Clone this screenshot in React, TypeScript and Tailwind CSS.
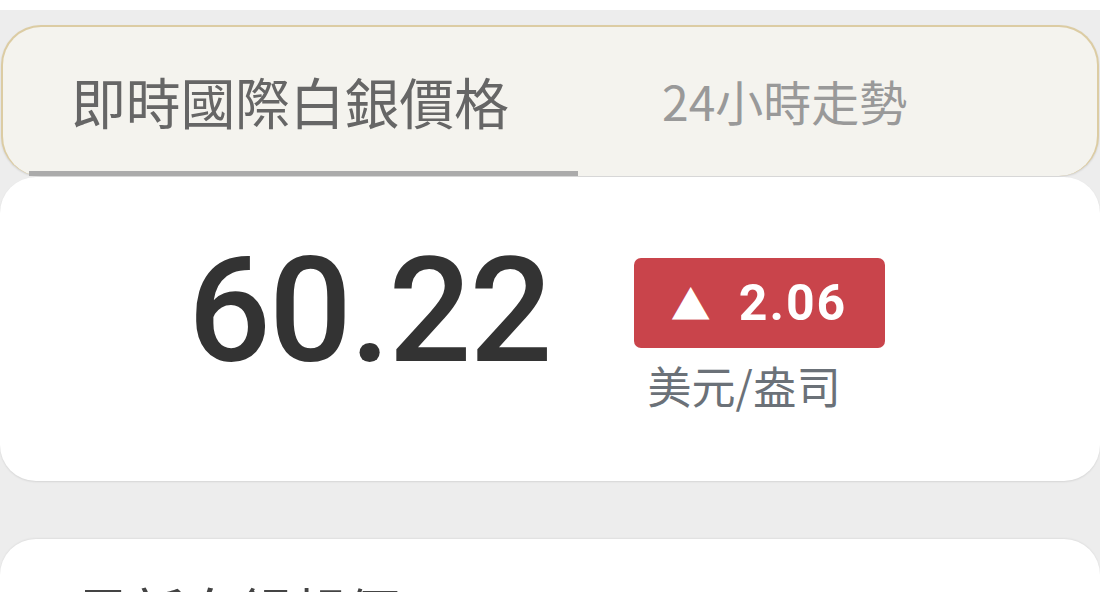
import React from "react";

const cjk = '"Noto Sans CJK TC", "Noto Sans", sans-serif';

export default function App() {
  return (
    <div className="w-[1100px] h-[592px] overflow-hidden bg-[#ededed]" style={{ fontFamily: cjk }}>
      <div className="h-[10px] bg-white" />
      <div className="pt-[15px] px-[1px]">
        <div className="h-[151px] rounded-[40px] border-x-2 border-t-2 border-b-0 border-[#dccca3] bg-[#f4f3ee] shadow-[0_1px_2px_rgba(0,0,0,0.12)] flex">
          <div className="ml-[26px] w-[549px] flex flex-col">
            <div className="flex-1 flex items-center pl-[42px] pt-[2px]">
              <span className="text-[55px] leading-none text-[#666666] tracking-[-0.3px]">即時國際白銀價格</span>
            </div>
            <div className="h-[5px] bg-[#ababab]" />
          </div>
          <div className="flex-1 flex flex-col">
            <div className="flex-1 flex items-center pl-[84px] pt-[2px]">
              <span className="text-[48px] leading-none text-[#999999]">24小時走勢</span>
            </div>
            <div className="h-[5px]" />
          </div>
        </div>
      </div>
      <div className="mt-[1px] h-[304px] rounded-[36px] bg-white shadow-[0_1px_2px_rgba(0,0,0,0.1)] flex items-start pl-[188px] pt-[62px]">
        <div
          className="text-[146px] leading-none font-medium text-[#333333] tracking-[-2px]"
          style={{ fontFamily: 'Roboto, "Noto Sans", sans-serif' }}
        >
          60.22
        </div>
        <div className="ml-[83px] mt-[19px] flex flex-col">
          <div className="w-[251px] h-[90px] rounded-[7px] bg-[#c9444b] flex items-center justify-center gap-[28px] text-white">
            <span className="text-[40px] leading-none">▲</span>
            <span
              className="text-[50px] leading-none font-bold tracking-[2px]"
              style={{ fontFamily: 'Roboto, "Noto Sans", sans-serif' }}
            >
              2.06
            </span>
          </div>
          <div className="mt-[15px] pl-[14px] text-[44px] leading-none text-[#6b7178]">美元/盎司</div>
        </div>
      </div>
      <div className="mt-[58px] h-[200px] rounded-[36px] bg-white shadow-[0_-1px_2px_rgba(0,0,0,0.06)] pl-[76px] pt-[45px]">
        <span className="text-[54px] leading-none text-[#444444]">最新白銀報價</span>
      </div>
    </div>
  );
}
